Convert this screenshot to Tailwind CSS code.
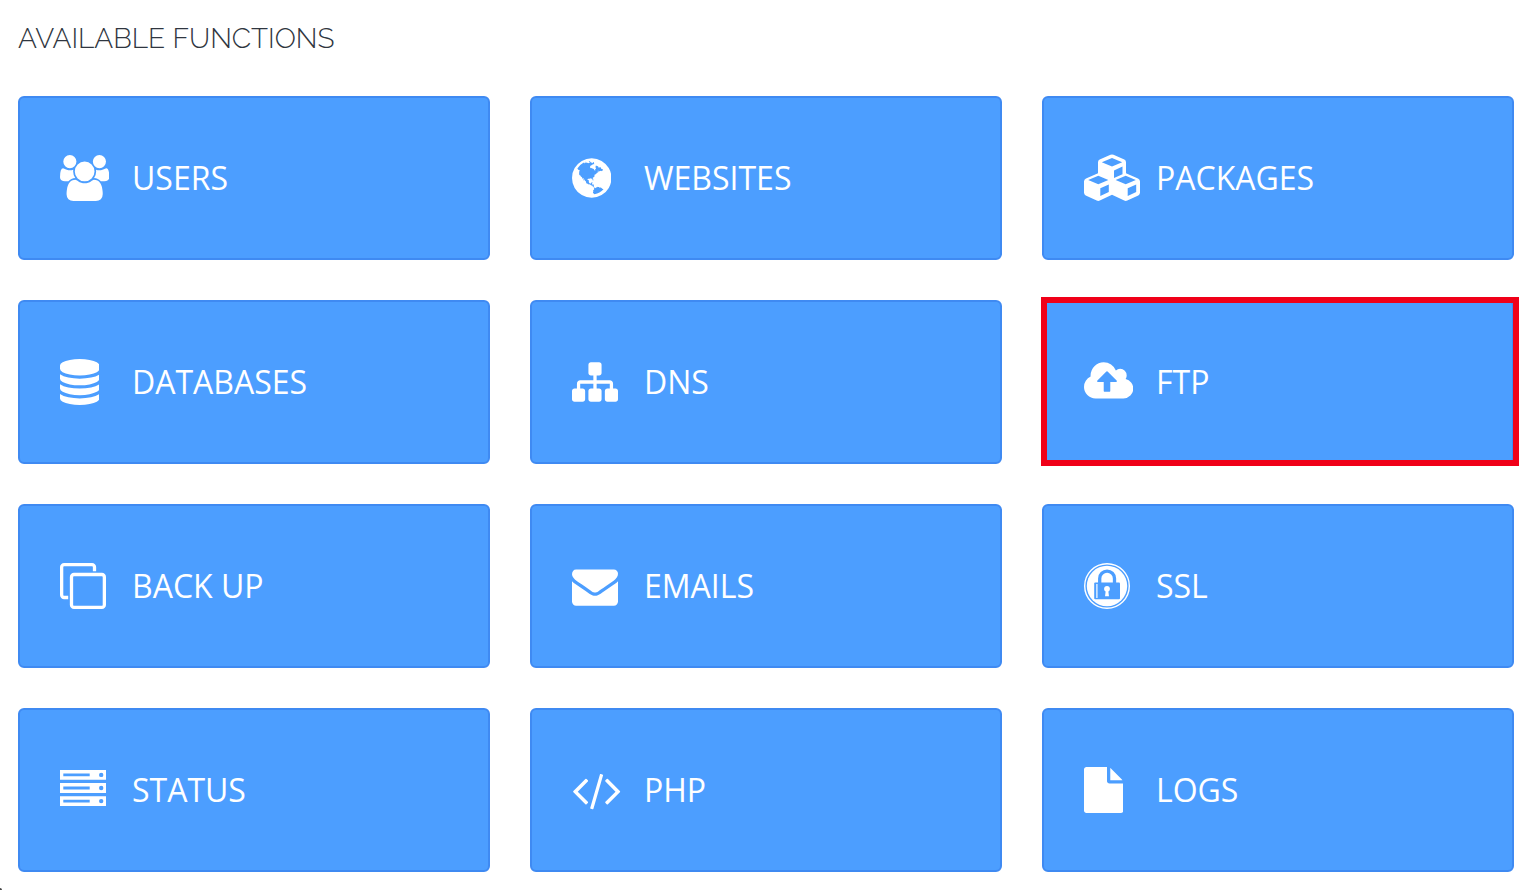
<!DOCTYPE html>
<html lang="en">
<head>
<meta charset="utf-8">
<meta name="viewport" content="width=device-width, initial-scale=1">
<title>Available Functions</title>
<script src="https://cdn.jsdelivr.net/npm/@tailwindcss/browser@4"></script>
</head>
<body class="relative min-h-screen bg-white pt-[21px] pr-[10px] pb-[18px] pl-[18px] font-['Open_Sans',sans-serif]">
<h1 class="mb-[39px] text-[28px] leading-9 font-light text-[#2f3640] font-['Raleway','Lato',sans-serif]">AVAILABLE FUNCTIONS</h1>
<main class="grid grid-cols-3 gap-10 text-[32px] leading-10 text-white">
  <a href="#users" class="flex h-[164px] items-center rounded-md border-2 border-[#3f8af2] bg-[#4c9eff] px-10">
    <span class="w-18 shrink-0"><svg class="h-[46px] w-auto" viewBox="64 0 1920 1792" fill="currentColor" aria-hidden="true"><path d="M657 896q-162 5-265 128H258q-82 0-138-40.500T64 865q0-353 124-353 6 0 43.500 21t97.500 42.500T448 597q67 0 133-23-5 37-5 66 0 139 81 256zm1071 637q0 120-73 189.500t-194 69.500H587q-121 0-194-69.500T320 1533q0-53 3.500-103.500t14-109T365 1212t43-97.500 62-81 85.500-53.500T667 960q10 0 43 21.500t73 48 107 48 135 21.500 135-21.500 107-48 73-48 43-21.500q61 0 111.500 20t85.500 53.500 62 81 43 97.500 26.500 108.500 14 109 3.500 103.500zM704 256q0 106-75 181t-181 75-181-75-75-181 75-181T448 0t181 75 75 181zm704 384q0 159-112.500 271.500T1024 1024 752.500 911.500 640 640t112.500-271.500T1024 256t271.500 112.500T1408 640zm576 225q0 78-56 118.500t-138 40.500h-134q-103-123-265-128 81-117 81-256 0-29-5-66 66 23 133 23 59 0 119-21.500t97.500-42.500 43.500-21q124 0 124 353zm-128-609q0 106-75 181t-181 75-181-75-75-181 75-181 181-75 181 75 75 181z"/></svg></span>
    <span>USERS</span>
  </a>
  <a href="#websites" class="flex h-[164px] items-center rounded-md border-2 border-[#3f8af2] bg-[#4c9eff] px-10">
    <span class="w-18 shrink-0"><svg class="h-[46px] w-auto" viewBox="128 0 1536 1792" fill="currentColor" aria-hidden="true"><path d="M896 128q209 0 385.500 103T1561 510.500 1664 896t-103 385.500-279.500 279.500T896 1664t-385.500-103T231 1281.500 128 896t103-385.500T510.500 231 896 128zm274 521q-2 1-9.500 9.500T1147 669q2 0 4.500-5t5-11 3.500-7q6-7 22-15 14-6 52-12 34-8 51 11-2-2 9.500-13t14.500-12q3-2 15-4.500t15-7.500l2-22q-12 1-17.500-7t-6.500-21q0 2-6 8 0-7-4.500-8t-11.500 1-9 1q-10-3-15-7.500t-8-16.500-4-15q-2-5-9.500-11t-9.500-10q-1-2-2.500-5.500t-3-6.500-4-5.500-5.500-2.500-7 5-7.500 10-4.500 5q-3-2-6-1.500t-4.500 1-4.500 3-5 3.500q-3 2-8.500 3t-8.500 2q15-5-1-11-10-4-16-3 9-4 7.500-12t-8.500-14h5q-1-4-8.500-8.500t-17.500-8.500-13-6q-8-5-34-9.500t-33-.5q-5 6-4.500 10.500t4 14 3.500 12.500q1 6-5.500 13t-6.500 12q0 7 14 15.500t10 21.500q-3 8-16 16t-16 12q-5 8-1.500 18.500t10.500 16.500q2 2 1.500 4t-3.500 4.500-5.500 4-6.500 3.500l-3 2q-11 5-20.500-6t-13.500-26q-7-25-16-30-23-8-29 1-5-13-41-26-25-9-58-4 6-1 0-15-7-15-19-12 3-6 4-17.500t1-13.500q3-13 12-23 1-1 7-8.500t9.500-13.500.5-6q35 4 50-11 5-5 11.500-17t10.500-17q9-6 14-5.500t14.500 5.500 14.500 5q14 1 15.500-11T976 301q12 1 3-17-4-7-8-9-12-4-27 5-8 4 2 8-1-1-9.500 10.500T920 316t-16-5q-1-1-5.500-13.500T889 284q-8 0-16 15 3-8-11-15t-24-8q19-12-8-27-7-4-20.500-5t-19.500 4q-5 7-5.500 11.500t5 8 10.500 5.500 11.500 4 8.500 3q14 10 8 14-2 1-8.500 3.500T799 302t-6 4q-3 4 0 14t-2 14q-5-5-9-17.500t-7-16.500q7 9-25 6l-10-1q-4 0-16 2t-20.500 1-13.500-8q-4-8 0-20 1-4 4-2-4-3-11-9.500t-10-8.500q-46 15-94 41 6 1 12-1 5-2 13-6.500t10-5.500q34-14 42-7l5-5q14 16 20 25-7-4-30-1-20 6-22 12 7 12 5 18-4-3-11.500-10t-14.500-11-15-5q-16 0-22 1-146 80-235 222 7 7 12 8 4 1 5 9t2.500 11 11.500-3q9 8 3 19 1-1 44 27 19 17 21 21 3 11-10 18-1-2-9-9t-9-4q-3 5 .5 18.500t10.500 12.500q-7 0-9.500 16t-2.500 35.500-1 23.500l2 1q-3 12 5.500 34.500T454 792q-13 3 20 43 6 8 8 9 3 2 12 7.500t15 10 10 10.500q4 5 10 22.500t14 23.500q-2 6 9.500 20t10.500 23q-1 0-2.500 1t-2.500 1q3 7 15.500 14t15.500 13q1 3 2 10t3 11 8 2q2-20-24-62-15-25-17-29-3-5-5.500-15.500T551 890q2 0 6 1.500t8.500 3.500 7.500 4 2 3q-3 7 2 17.500t12 18.500 17 19 12 13q6 6 14 19.500t0 13.500q9 0 20 10.500t17 19.500q5 8 8 26t5 24q2 7 8.500 13.500t12.500 9.500l16 8 13 7q5 2 18.500 10.500t21.500 11.500q10 4 16 4t14.500-2.500 13.500-3.500q15-2 29 15t21 21q36 19 55 11-2 1 .5 7.500t8 15.500 9 14.500 5.500 8.500q5 6 18 15t18 15q6-4 7-9-3 8 7 20t18 10q14-3 14-32-31 15-49-18 0-1-2.500-5.500t-4-8.500-2.500-8.500 0-7.500 5-3q9 0 10-3.500t-2-12.500-4-13q-1-8-11-20t-12-15q-5 9-16 8t-16-9q0 1-1.500 5.500t-1.500 6.500q-13 0-15-1 1-3 2.500-17.500t3.500-22.500q1-4 5.500-12t7.500-14.500 4-12.500-4.500-9.500-17.500-2.500q-19 1-26 20-1 3-3 10.500t-5 11.500-9 7q-7 3-24 2t-24-5q-13-8-22.500-29t-9.500-37q0-10 2.500-26.500t3-25T722 960q3-2 9-9.500t10-10.500q2-1 4.500-1.500t4.500 0 4-1.500 3-6q-1-1-4-3-3-3-4-3 7 3 28.500-1.500t27.500 1.500q15 11 22-2 0-1-2.500-9.500T823 900q5 27 29 9 3 3 15.500 5t17.500 5q3 2 7 5.500t5.500 4.500 5-.5 8.500-6.500q10 14 12 24 11 40 19 44 7 3 11 2t4.500-9.500 0-14T956 955l-1-8v-18l-1-8q-15-3-18.500-12t1.500-18.500 15-18.500q1-1 8-3.500t15.500-6.500 12.500-8q21-19 15-35 7 0 11-9-1 0-5-3t-7.500-5-4.500-2q9-5 2-16 5-3 7.500-11t7.500-10q9 12 21 2 8-8 1-16 5-7 20.500-10.500t18.500-9.500q7 2 8-2t1-12 3-12q4-5 15-9t13-5l17-11q3-4 0-4 18 2 31-11 10-11-6-20 3-6-3-9.500t-15-5.500q3-1 11.500-.5t10.500-1.500q15-10-7-16-17-5-43 12zm-163 877q206-36 351-189-3-3-12.500-4.500t-12.500-3.500q-18-7-24-8 1-7-2.500-13t-8-9-12.500-8-11-7q-2-2-7-6t-7-5.500-7.500-4.500-8.500-2-10 1l-3 1q-3 1-5.500 2.500t-5.500 3-4 3 0 2.500q-21-17-36-22-5-1-11-5.500t-10.500-7-10-1.500-11.500 7q-5 5-6 15t-2 13q-7-5 0-17.500t2-18.500q-3-6-10.500-4.500t-12 4.500-11.500 8.500-9 6.500-8.500 5.500-8.500 7.500q-3 4-6 12t-5 11q-2-4-11.500-6.500T981 1234q2 10 4 35t5 38q7 31-12 48-27 25-29 40-4 22 12 26 0 7-8 20.500t-7 21.500q0 6 2 16z"/></svg></span>
    <span>WEBSITES</span>
  </a>
  <a href="#packages" class="flex h-[164px] items-center rounded-md border-2 border-[#3f8af2] bg-[#4c9eff] px-10">
    <span class="w-18 shrink-0"><svg class="h-[46px] w-14 overflow-visible" viewBox="0 1 56 46" fill="currentColor" fill-rule="evenodd" aria-hidden="true"><path d="M26.500 .8Q28 .2 29.500 .8L40.300 5.500Q42 6.400 42 8.200V19.300L54 24.400Q56 25.300 56 27.400V38.500Q56 40.500 54.300 41.400L43.300 46.600Q41.700 47.300 40.200 46.600L28 40.700 15.800 46.600Q14.300 47.300 12.700 46.600L1.700 41.400Q0 40.500 0 38.500V27.400Q0 25.300 2 24.400L14 19.300V8.200Q14 6.400 15.700 5.500ZM28 4 17.800 8.200 28 12.600 38.200 8.200ZM30 16.500V24L38.500 20.200V12.600ZM14.300 21.700 4.200 26 14.300 30.300 24.400 26ZM16.300 34.200V42L24.800 37.900V30.500ZM41.700 21.700 31.600 26 41.700 30.300 51.800 26ZM43.700 34.200V42L52.200 37.900V30.500Z"/></svg></span>
    <span>PACKAGES</span>
  </a>
  <a href="#databases" class="flex h-[164px] items-center rounded-md border-2 border-[#3f8af2] bg-[#4c9eff] px-10">
    <span class="w-18 shrink-0"><svg class="h-[46px] w-auto" viewBox="0 0 1536 1792" fill="currentColor" aria-hidden="true"><path d="M768 768q237 0 443-43t325-127v170q0 69-103 128t-280 93.500-385 34.500-385-34.500T103 896 0 768V598q119 84 325 127t443 43zm0 768q237 0 443-43t325-127v170q0 69-103 128t-280 93.500-385 34.500-385-34.500T103 1664 0 1536v-170q119 84 325 127t443 43zm0-384q237 0 443-43t325-127v170q0 69-103 128t-280 93.500-385 34.500-385-34.500T103 1280 0 1152V982q119 84 325 127t443 43zM768 0q208 0 385 34.500t280 93.500 103 128v128q0 69-103 128t-280 93.500T768 640t-385-34.500T103 512 0 384V256q0-69 103-128t280-93.500T768 0z"/></svg></span>
    <span>DATABASES</span>
  </a>
  <a href="#dns" class="flex h-[164px] items-center rounded-md border-2 border-[#3f8af2] bg-[#4c9eff] px-10">
    <span class="w-18 shrink-0"><svg class="h-[46px] w-auto" viewBox="0 0 1792 1792" fill="currentColor" aria-hidden="true"><path d="M1792 1248v320q0 40-28 68t-68 28h-320q-40 0-68-28t-28-68v-320q0-40 28-68t68-28h96V960H960v192h96q40 0 68 28t28 68v320q0 40-28 68t-68 28H736q-40 0-68-28t-28-68v-320q0-40 28-68t68-28h96V960H320v192h96q40 0 68 28t28 68v320q0 40-28 68t-68 28H96q-40 0-68-28t-28-68v-320q0-40 28-68t68-28h96V960q0-52 38-90t90-38h512V640h-96q-40 0-68-28t-28-68V224q0-40 28-68t68-28h320q40 0 68 28t28 68v320q0 40-28 68t-68 28h-96v192h512q52 0 90 38t38 90v192h96q40 0 68 28t28 68z"/></svg></span>
    <span>DNS</span>
  </a>
  <a href="#ftp" class="relative flex h-[164px] items-center rounded-md border-2 border-[#3f8af2] bg-[#4c9eff] px-10">
    <span class="w-18 shrink-0"><svg class="h-[46px] w-auto" viewBox="0 0 1920 1792" fill="currentColor" aria-hidden="true"><path d="M1280 864q0-14-9-23L919 489q-9-9-23-9t-23 9L522 840q-10 12-10 24 0 14 9 23t23 9h224v352q0 13 9.500 22.500T800 1280h192q13 0 22.500-9.500t9.500-22.500V896h224q13 0 22.500-9.500T1280 864zm640 288q0 159-112.500 271.500T1536 1536H448q-185 0-316.500-131.500T0 1088q0-130 70-240t188-165q-2-30-2-43 0-212 150-362t362-150q156 0 285.500 87T1242 446q71-62 166-62 106 0 181 75t75 181q0 76-41 138 130 31 213.500 135.500T1920 1152z"/></svg></span>
    <span>FTP</span>
    <span class="pointer-events-none absolute -top-[5px] -right-[7px] -bottom-1 -left-[3px] border-6 border-[#f00018]"></span>
  </a>
  <a href="#backup" class="flex h-[164px] items-center rounded-md border-2 border-[#3f8af2] bg-[#4c9eff] px-10">
    <span class="w-18 shrink-0"><svg class="h-[46px] w-auto" viewBox="0 0 1792 1792" fill="currentColor" aria-hidden="true"><path d="M1664 1632V544q0-13-9.500-22.500T1632 512H544q-13 0-22.500 9.500T512 544v1088q0 13 9.500 22.500t22.500 9.500h1088q13 0 22.500-9.500t9.500-22.500zm128-1088v1088q0 66-47 113t-113 47H544q-66 0-113-47t-47-113V544q0-66 47-113t113-47h1088q66 0 113 47t47 113zm-384-384v160h-128V160q0-13-9.500-22.500T1248 128H160q-13 0-22.500 9.500T128 160v1088q0 13 9.500 22.500t22.500 9.500h160v128H160q-66 0-113-47T0 1248V160Q0 94 47 47T160 0h1088q66 0 113 47t47 113z"/></svg></span>
    <span>BACK UP</span>
  </a>
  <a href="#emails" class="flex h-[164px] items-center rounded-md border-2 border-[#3f8af2] bg-[#4c9eff] px-10">
    <span class="w-18 shrink-0"><svg class="h-[46px] w-auto" viewBox="0 0 1792 1792" fill="currentColor" aria-hidden="true"><path d="M1792 710v794q0 66-47 113t-113 47H160q-66 0-113-47T0 1504V710q44 49 101 87 362 246 497 345 57 42 92.500 65.500t94.500 48 110 24.500h2q51 0 110-24.500t94.500-48 92.500-65.500q170-123 498-345 57-39 100-87zm0-294q0 79-49 151t-122 123q-376 261-468 325-10 7-42.500 30.500t-54 38-52 32.500-57.500 27-50 9h-2q-23 0-50-9t-57.500-27-52-32.500-54-38T639 1015q-91-64-262-182.500T172 690q-62-42-117-115.500T0 438q0-78 41.500-130T160 256h1472q65 0 112.500 47t47.500 113z"/></svg></span>
    <span>EMAILS</span>
  </a>
  <a href="#ssl" class="flex h-[164px] items-center rounded-md border-2 border-[#3f8af2] bg-[#4c9eff] px-10">
    <span class="w-18 shrink-0"><svg class="size-[46px]" viewBox="0 0 46 46" fill="none" aria-hidden="true"><circle cx="23" cy="23" r="22.300" stroke="#fff" stroke-width="1.400"/><circle cx="23" cy="23" r="20.200" fill="#fff"/><path d="M15.700 20v-4.500a7.400 7.400 0 0 1 14.800 0V20" stroke="#4c9eff" stroke-width="3.300"/><rect x="10.200" y="19.500" width="25.800" height="16.700" rx="1" fill="#4c9eff"/><path d="M12.900 21v14" stroke="#fff" stroke-width="1.200"/><circle cx="23" cy="25.800" r="2.900" fill="#fff"/><path d="M22 26h2l1 7.300h-4z" fill="#fff"/></svg></span>
    <span>SSL</span>
  </a>
  <a href="#status" class="flex h-[164px] items-center rounded-md border-2 border-[#3f8af2] bg-[#4c9eff] px-10">
    <span class="w-18 shrink-0"><svg class="size-[46px]" viewBox="0 0 46 46" aria-hidden="true"><g fill="#fff"><path d="M0 3h46v9.800H0zM0 16.100h46v9.800H0zM0 29.200h46V39H0z"/></g><g fill="#4c9eff"><path d="M3.300 6.500h26.400v2.800H3.300zM3.300 19.600h26.400v2.800H3.300zM3.300 32.700h26.400v2.800H3.300z"/><circle cx="41.200" cy="7.900" r="2.200"/><circle cx="41.200" cy="21" r="2.200"/><circle cx="41.200" cy="34.100" r="2.200"/></g></svg></span>
    <span>STATUS</span>
  </a>
  <a href="#php" class="flex h-[164px] items-center rounded-md border-2 border-[#3f8af2] bg-[#4c9eff] px-10">
    <span class="w-18 shrink-0"><svg class="h-[46px] w-auto" viewBox="0 0 1920 1792" fill="currentColor" aria-hidden="true"><path d="M617 1399l-50 50q-10 10-23 10t-23-10L55 983q-10-10-10-23t10-23l466-466q10-10 23-10t23 10l50 50q10 10 10 23t-10 23L224 960l393 393q10 10 10 23t-10 23zm591-1067L835 1623q-4 13-15.500 19.500T796 1645l-62-17q-13-4-19.500-15.500T712 1588l373-1291q4-13 15.500-19.500t23.500-2.500l62 17q13 4 19.500 15.500t2.500 24.500zm657 651l-466 466q-10 10-23 10t-23-10l-50-50q-10-10-10-23t10-23l393-393-393-393q-10-10-10-23t10-23l50-50q10-10 23-10t23 10l466 466q10 10 10 23t-10 23z"/></svg></span>
    <span>PHP</span>
  </a>
  <a href="#logs" class="flex h-[164px] items-center rounded-md border-2 border-[#3f8af2] bg-[#4c9eff] px-10">
    <span class="w-18 shrink-0"><svg class="h-[46px] w-auto" viewBox="0 0 1536 1792" fill="currentColor" aria-hidden="true"><path d="M1024 512V40q22 14 36 28l408 408q14 14 28 36h-472zm-128 32q0 40 28 68t68 28h544v1056q0 40-28 68t-68 28H96q-40 0-68-28t-28-68V96q0-40 28-68T96 0h800v544z"/></svg></span>
    <span>LOGS</span>
  </a>
</main>
<span class="absolute bottom-0 left-0 size-[2px] rounded-tr-full bg-[#444]"></span>
</body>
</html>
